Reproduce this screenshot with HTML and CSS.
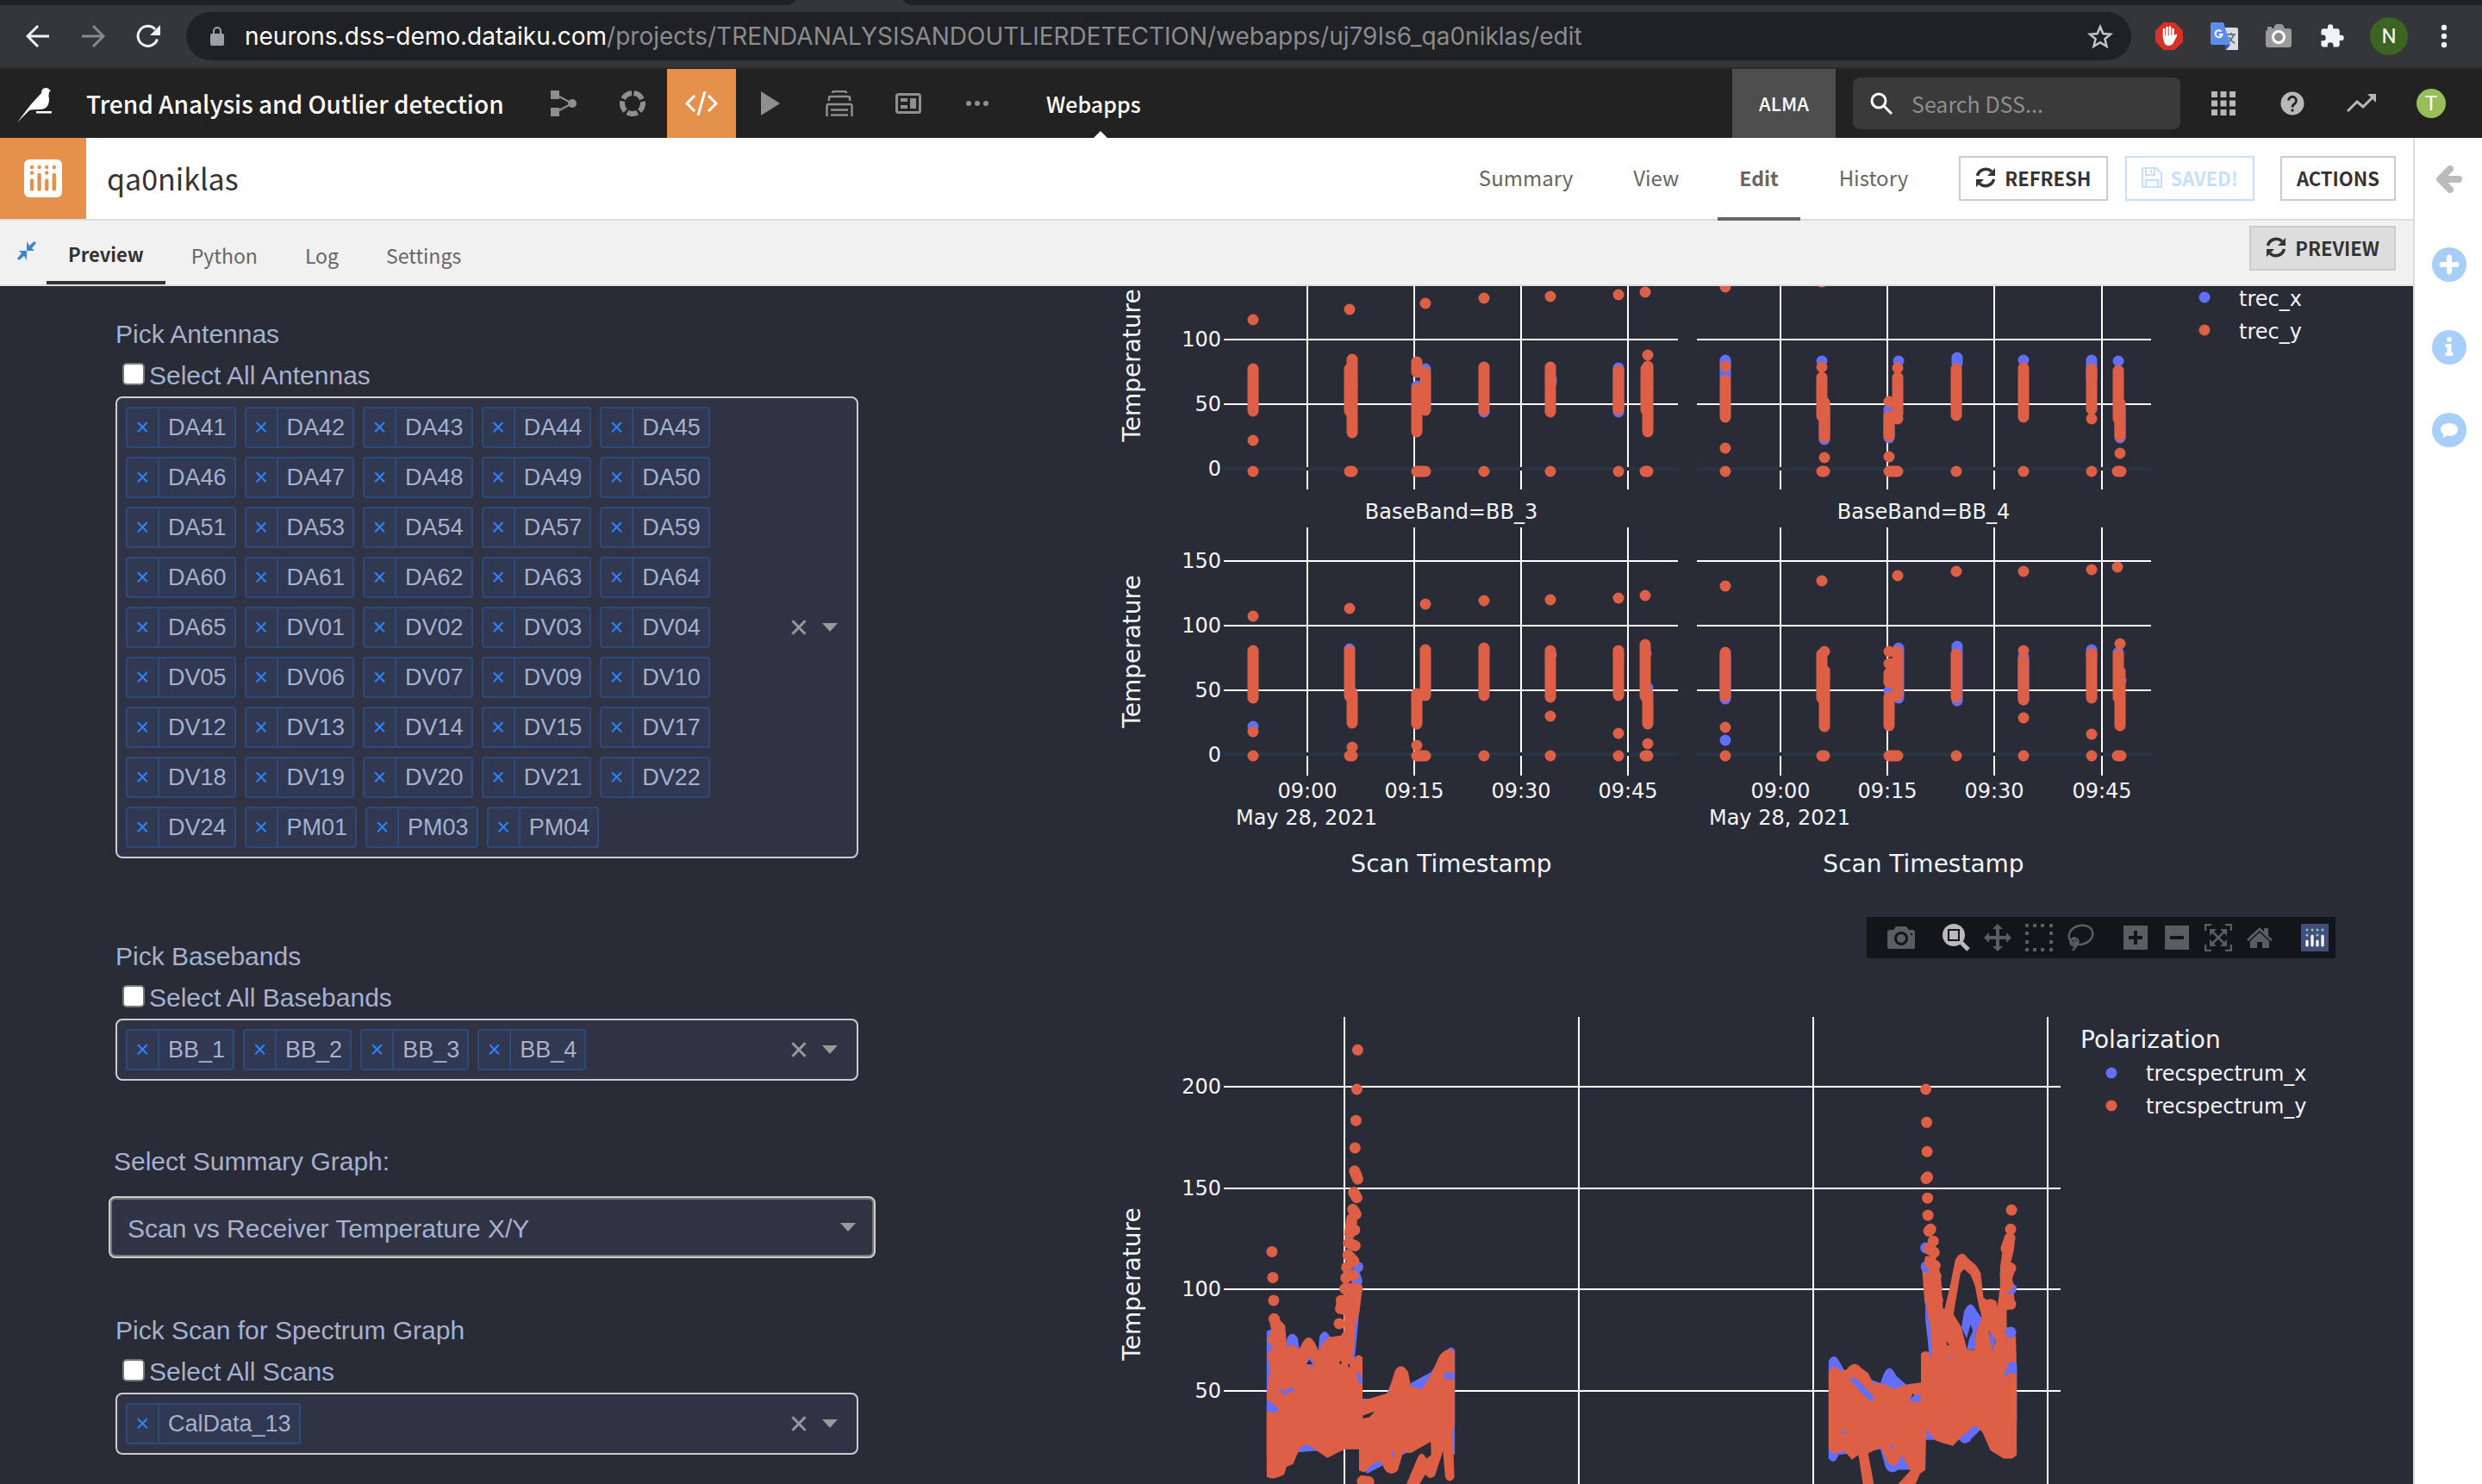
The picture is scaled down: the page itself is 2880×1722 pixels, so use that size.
FILE: index.html
```html
<!DOCTYPE html>
<html lang="en">
<head>
<meta charset="utf-8">
<title>qa0niklas</title>
<link rel="stylesheet" href="styles.css">
</head>
<body>
<div class="tabstrip"><svg class="tabshape" viewBox="0 0 150 6" aria-hidden="true"><path d="M0 6Q6 4 9 0H132Q136 5 143 6Z" fill="#35363a"/></svg></div>
<div class="browser">
  <button class="bbtn" aria-label="Back"><svg width="28" height="28" viewBox="0 0 28 28" fill="none" stroke="#f1f3f4" stroke-width="3"><path d="M27 14H3M14 2L2 14l12 12"/></svg></button>
  <button class="bbtn" aria-label="Forward"><svg width="28" height="28" viewBox="0 0 28 28" fill="none" stroke="#88898c" stroke-width="3"><path d="M1 14h24M14 2l12 12-12 12"/></svg></button>
  <button class="bbtn" aria-label="Reload"><svg width="28" height="28" viewBox="0 0 28 28"><path d="M24.500 17.500A11.500 11.500 0 1 1 22 6" fill="none" stroke="#f1f3f4" stroke-width="3"/><path d="M28 1v12H16z" fill="#f1f3f4"/></svg></button>
  <div class="urlbar">
    <svg width="16" height="22" viewBox="0 0 16 22"><rect y="8" width="16" height="14" rx="2" fill="#9aa0a6"/><path d="M4 9V5a4 4 0 0 1 8 0v4" fill="none" stroke="#9aa0a6" stroke-width="2"/></svg>
    <span class="url"><b>neurons.dss-demo.dataiku.com</b>/projects/TRENDANALYSISANDOUTLIERDETECTION/webapps/uj79Is6_qa0niklas/edit</span>
    <svg width="30" height="28" viewBox="0 0 30 28"><path d="M15 3l3.300 8 8.700.700-6.600 5.600 2.100 8.500L15 21.200l-7.500 4.600 2.100-8.500L3 11.700l8.700-.700z" fill="none" stroke="#c4c7ca" stroke-width="2.500"/></svg>
  </div>
  <div class="exts">
    <svg width="32" height="32" viewBox="0 0 32 32"><path d="M9.500 0h13L32 9.500v13L22.500 32h-13L0 22.500v-13z" fill="#d93025"/><path d="M10 8v10M13.500 6v11M17 5.500V17M20.500 8v9" stroke="#fff" stroke-width="2.600" stroke-linecap="round"/><path d="M8.800 15h13l2.500-1.500q1.500.500.500 2.500l-4 8q-2 3-5 3-5 0-6-5z" fill="#fff"/></svg>
    <svg width="32" height="32" viewBox="0 0 32 32"><path d="M14 6h16q2 0 2 2v24H18z" fill="#dadce0"/><path d="M19 14h10M24 12v2M27 14q-2 6-7 9M21 17q3 5 7 7" stroke="#607d8b" stroke-width="2" fill="none"/><path d="M16 26h7l-5 6z" fill="#3f51b5"/><path d="M2 0h13l8 26H2q-2 0-2-2V2q0-2 2-2z" fill="#5a8dee"/><path d="M12.500 10.500A4 4 0 1 0 13.500 14H9.500" fill="none" stroke="#fff" stroke-width="2"/></svg>
    <svg width="30" height="28" viewBox="0 0 30 28"><path d="M2 7V3h5v2h2l2-4q.500-1 2-1h5q1 0 2 1l2 4h5q3 0 3 3v16q0 3-3 3H3q-3 0-3-3V9q0-2 2-2z" fill="#9a9a9a"/><circle cx="15" cy="15" r="6.500" fill="#8a8a8a" stroke="#fff" stroke-width="3"/></svg>
    <svg width="30" height="30" viewBox="0 0 24 24"><path d="M20.500 11H19V7c0-1.100-.9-2-2-2h-4V3.500a2.500 2.500 0 0 0-5 0V5H4c-1.100 0-2 .9-2 2v3.800h1.500a2.700 2.700 0 0 1 0 5.400H2V20c0 1.100.9 2 2 2h3.800v-1.500a2.700 2.700 0 0 1 5.400 0V22H17c1.100 0 2-.9 2-2v-4h1.500a2.500 2.500 0 0 0 0-5z" fill="#f1f3f4"/></svg>
    <span class="avatar">N</span>
    <svg width="8" height="28" viewBox="0 0 8 28" fill="#f1f3f4"><circle cx="4" cy="4" r="3.200"/><circle cx="4" cy="14" r="3.200"/><circle cx="4" cy="24" r="3.200"/></svg>
  </div>
</div>

<header class="nav">
  <a class="logo" href="#" aria-label="Home"><svg width="40" height="42" viewBox="0 0 40 42" fill="#fff"><path d="M0 41L16 20 28 7Q28 1 33 1q4 0 4 2l2 1-2 2q-1 3 0 8 0 12-11 12-9 0-12 1Z"/><path d="M22 28h18v2.500H22z"/></svg></a>
  <a class="project" href="#">Trend Analysis and Outlier detection</a>
  <nav class="tools">
    <a href="#" aria-label="Flow"><svg width="30" height="32" viewBox="0 0 30 32" fill="#8f8f8f"><path d="M0 1h10v10H0zM0 21h10v10H0z"/><circle cx="25" cy="16" r="5"/><path d="M8 7l17 9L8 25" fill="none" stroke="#8f8f8f" stroke-width="2"/></svg></a>
    <a href="#" aria-label="Lab"><svg width="30" height="30" viewBox="0 0 30 30"><circle cx="15" cy="15" r="12" fill="none" stroke="#8f8f8f" stroke-width="6" stroke-dasharray="12.100 2.980" transform="rotate(-83 15 15)"/></svg></a>
    <a class="on" href="#" aria-label="Code"><svg width="38" height="28" viewBox="0 0 38 28" fill="none" stroke="#fff" stroke-width="3"><path d="M11 5l-9 9 9 9M27 5l9 9-9 9M23 0l-8 28"/></svg></a>
    <a href="#" aria-label="Run"><svg width="22" height="28" viewBox="0 0 22 28" fill="#8f8f8f"><path d="M0 0l22 14L0 28z"/></svg></a>
    <a href="#" aria-label="Jobs"><svg width="32" height="30" viewBox="0 0 32 30" fill="none" stroke="#8f8f8f" stroke-width="2.500"><path d="M8 3q0-2 2-2h12q2 0 2 2M4 12V8q0-1 2-1h20q2 0 2 1v4M1.500 30V18q0-2 2-2h25q2 0 2 2v12M6 22.500h20M6 28.500h20"/></svg></a>
    <a href="#" aria-label="Dashboards"><svg width="30" height="24" viewBox="0 0 30 24"><rect x="1.500" y="1.500" width="27" height="21" rx="2" fill="none" stroke="#8f8f8f" stroke-width="3"/><path d="M6 6h8v4H6zM6 14h8v4H6zM17 6h7v12h-7z" fill="#8f8f8f"/></svg></a>
    <a href="#" aria-label="More"><svg width="26" height="6" viewBox="0 0 26 6" fill="#8f8f8f"><circle cx="3" cy="3" r="3"/><circle cx="13" cy="3" r="3"/><circle cx="23" cy="3" r="3"/></svg></a>
  </nav>
  <a class="crumb" href="#">Webapps</a>
  <span class="instance">ALMA</span>
  <label class="search"><svg width="26" height="26" viewBox="0 0 26 26" fill="none" stroke="#fff" stroke-width="3"><circle cx="10" cy="10" r="8"/><path d="M16 16l9 9"/></svg><input type="text" placeholder="Search DSS..." aria-label="Search DSS"></label>
  <div class="navicons">
    <a href="#" aria-label="Apps"><svg width="28" height="28" viewBox="0 0 28 28" fill="#b8b8b8"><path d="M0 0h7v7H0zM10.500 0h7v7h-7zM21 0h7v7h-7zM0 10.500h7v7H0zM10.500 10.500h7v7h-7zM21 10.500h7v7h-7zM0 21h7v7H0zM10.500 21h7v7h-7zM21 21h7v7h-7z"/></svg></a>
    <a href="#" aria-label="Help"><svg width="28" height="28" viewBox="0 0 28 28"><circle cx="14" cy="14" r="13.500" fill="#b8b8b8"/><path d="M9.500 10.500a4.500 4.500 0 1 1 7 4Q14 16 14 18.500" fill="none" stroke="#222" stroke-width="2.800"/><path d="M12.600 20.500h2.800v3h-2.800z" fill="#222"/></svg></a>
    <a href="#" aria-label="Activity"><svg width="34" height="22" viewBox="0 0 34 22"><path d="M1 20L12 9l7 6L31 3" fill="none" stroke="#b8b8b8" stroke-width="3"/><path d="M24 0h10v10z" fill="#b8b8b8"/></svg></a>
    <span class="user">T</span>
  </div>
</header>

<div class="workspace">
  <main class="main">
    <div class="titlebar">
      <span class="kind"><svg width="44" height="44" viewBox="0 0 44 44"><rect width="44" height="44" rx="6" fill="#fff"/><path d="M9 24.500v10M17.600 18v16.500M26.200 24.500v10M34.800 18v16.500M9 9h0M17.600 9h0M26.200 9h0M34.800 9h0M9 15.500h0M26.200 15.500h0" stroke="#e5914b" stroke-width="4.400" stroke-linecap="round"/></svg></span>
      <h1>qa0niklas</h1>
      <nav class="tabs"><a href="#">Summary</a><a href="#">View</a><a class="on" href="#">Edit</a><a href="#">History</a></nav>
      <div class="actions">
        <button class="btn"><svg class="sync" width="24" height="24" viewBox="0 0 24 24"><path d="M2.500 10A10 10 0 0 1 19 5M21.500 14A10 10 0 0 1 5 19" fill="none" stroke="#333" stroke-width="3.500"/><path d="M23 1v9h-9zM1 23v-9h9z" fill="#333"/></svg>REFRESH</button>
        <button class="btn saved"><svg width="24" height="24" viewBox="0 0 24 24" fill="none" stroke="#c6dffb" stroke-width="2"><path d="M1 1h16l6 6v16H1zM5 1v8h10V1M5 23v-8h14v8M11 3v4"/></svg>SAVED!</button>
        <button class="btn act">ACTIONS</button>
      </div>
    </div>
    <div class="subbar">
      <button class="shrink" aria-label="Collapse"><svg width="22" height="22" viewBox="0 0 22 22" fill="#3b88c9"><path d="M11 0v11h9l-3-3 5-6-2-2-6 5zM11 22V11H2l3 3-5 6 2 2 6-5z"/></svg></button>
      <nav class="subtabs"><a class="on" href="#">Preview</a><a href="#">Python</a><a href="#">Log</a><a href="#">Settings</a></nav>
      <button class="btn grey"><svg class="sync" width="24" height="24" viewBox="0 0 24 24"><path d="M2.500 10A10 10 0 0 1 19 5M21.500 14A10 10 0 0 1 5 19" fill="none" stroke="#333" stroke-width="3.500"/><path d="M23 1v9h-9zM1 23v-9h9z" fill="#333"/></svg>PREVIEW</button>
    </div>
    <div class="app">
      <form class="controls">
        <section class="field antennas">
          <p class="label">Pick Antennas</p>
          <label class="all"><input type="checkbox">Select All Antennas</label>
          <div class="multi"><ul class="chips">
            <li><button type="button">×</button>DA41</li><li><button type="button">×</button>DA42</li><li><button type="button">×</button>DA43</li><li><button type="button">×</button>DA44</li><li><button type="button">×</button>DA45</li>
            <li><button type="button">×</button>DA46</li><li><button type="button">×</button>DA47</li><li><button type="button">×</button>DA48</li><li><button type="button">×</button>DA49</li><li><button type="button">×</button>DA50</li>
            <li><button type="button">×</button>DA51</li><li><button type="button">×</button>DA53</li><li><button type="button">×</button>DA54</li><li><button type="button">×</button>DA57</li><li><button type="button">×</button>DA59</li>
            <li><button type="button">×</button>DA60</li><li><button type="button">×</button>DA61</li><li><button type="button">×</button>DA62</li><li><button type="button">×</button>DA63</li><li><button type="button">×</button>DA64</li>
            <li><button type="button">×</button>DA65</li><li><button type="button">×</button>DV01</li><li><button type="button">×</button>DV02</li><li><button type="button">×</button>DV03</li><li><button type="button">×</button>DV04</li>
            <li><button type="button">×</button>DV05</li><li><button type="button">×</button>DV06</li><li><button type="button">×</button>DV07</li><li><button type="button">×</button>DV09</li><li><button type="button">×</button>DV10</li>
            <li><button type="button">×</button>DV12</li><li><button type="button">×</button>DV13</li><li><button type="button">×</button>DV14</li><li><button type="button">×</button>DV15</li><li><button type="button">×</button>DV17</li>
            <li><button type="button">×</button>DV18</li><li><button type="button">×</button>DV19</li><li><button type="button">×</button>DV20</li><li><button type="button">×</button>DV21</li><li><button type="button">×</button>DV22</li>
            <li><button type="button">×</button>DV24</li><li><button type="button">×</button>PM01</li><li><button type="button">×</button>PM03</li><li><button type="button">×</button>PM04</li>
          </ul><button type="button" class="clear">×</button><span class="caret"></span></div>
        </section>
        <section class="field basebands">
          <p class="label">Pick Basebands</p>
          <label class="all"><input type="checkbox">Select All Basebands</label>
          <div class="multi"><ul class="chips"><li><button type="button">×</button>BB_1</li><li><button type="button">×</button>BB_2</li><li><button type="button">×</button>BB_3</li><li><button type="button">×</button>BB_4</li></ul><button type="button" class="clear">×</button><span class="caret"></span></div>
        </section>
        <section class="field summary">
          <label class="label" for="graph">Select Summary Graph:</label>
          <div class="pick"><select id="graph"><option>Scan vs Receiver Temperature X/Y</option></select><span class="caret"></span></div>
        </section>
        <section class="field scans">
          <p class="label">Pick Scan for Spectrum Graph</p>
          <label class="all"><input type="checkbox">Select All Scans</label>
          <div class="multi"><ul class="chips"><li><button type="button">×</button>CalData_13</li></ul><button type="button" class="clear">×</button><span class="caret"></span></div>
        </section>
      </form>

      <div class="charts">
        <svg class="plot" viewBox="1280 332 1520 732" role="img" aria-label="Temperature by scan timestamp">
          <path class="zero" d="M1420 544H1947M1969 544H2496M1420 875H1947M1969 875H2496"/>
          <path class="grid" d="M1517 332V568M1641 332V568M1765 332V568M1889 332V568M2066 332V568M2190 332V568M2314 332V568M2439 332V568M1517 612V900M1641 612V900M1765 612V900M1889 612V900M2066 612V900M2190 612V900M2314 612V900M2439 612V900M1420 394H1947M1420 469H1947M1969 394H2496M1969 469H2496M1420 651H1947M1420 726H1947M1420 801H1947M1969 651H2496M1969 726H2496M1969 801H2496"/>
          <path class="gap" d="M1515 544h4M1639 544h4M1763 544h4M1887 544h4M2064 544h4M2188 544h4M2312 544h4M2437 544h4M1515 875h4M1639 875h4M1763 875h4M1887 875h4M2064 875h4M2188 875h4M2312 875h4M2437 875h4"/>
          <g class="dots blue">
            <path d="M1569 448h0M1644 448h0M1654 428h0M1722 478h0M1800 440v4M1878 427V478M1912 451h0"/>
            <path d="M1454 843h0M1566 753h0M1568 802h0M1644 812h0M1722 758h0M1800 760h0M1878 760h0M1910 758h0M1912 798h0"/>
            <path d="M2002 418v20M2114 419h0M2117 475V510M2192 475V508M2203 419h0M2271 415V422M2348 418h0M2427 418V440M2458 419h0M2460 476V508"/>
            <path d="M2002 762V811M2002 859h0M2117 786h0M2192 802h0M2203 752V810M2271 750V813M2348 762V812M2427 754V762M2458 757h0M2461 790h0"/>
          </g>
          <g class="dots red">
            <path d="M1454 371h0M1454 428V477M1454 511h0M1454 547h0M1566 359h0M1566 428V477M1569 417V502M1566 547h3M1644 420V432M1644 451V501M1644 547h10M1654 352h0M1654 432V476M1722 346h0M1722 426V476M1722 547h0M1799 344h0M1799 426V478M1799 547h0M1878 342h0M1878 430V475M1878 547h0M1909 339h0M1910 428V476M1912 412h0M1912 425V501M1909 547h3"/>
            <path d="M1454 715h0M1454 755V810M1454 849h0M1454 877h0M1566 706h0M1566 755V808M1569 805V839M1569 867h0M1566 877h3M1644 805V840M1644 865h0M1644 877h10M1654 701h0M1654 754V807M1722 697h0M1722 752V807M1722 877h0M1799 696h0M1799 755V809M1799 831h0M1799 877h0M1878 694h0M1878 755V807M1878 851h0M1878 877h0M1909 691h0M1909 748V808M1912 805V840M1912 863h0M1909 877h3"/>
            <path d="M2002 333h0M2002 425h0M2002 441V484M2002 520h0M2002 547h0M2114 327h0M2114 426h0M2114 438V483M2117 467V507M2117 531h0M2114 547h3M2192 466h0M2192 483V506M2192 530h0M2192 547h10M2202 427h0M2202 438V480M2202 486h0M2270 428V482M2270 547h0M2348 427V484M2348 547h0M2427 428V475M2427 486h0M2427 547h0M2458 430V486M2460 468V506M2460 526h0M2457 547h4"/>
            <path d="M2002 680h0M2002 757V808M2002 844h0M2002 877h0M2114 674h0M2114 759V810M2117 756h0M2117 778V843M2114 877h3M2192 756h0M2192 770h0M2192 781V792M2192 809V842M2192 877h10M2202 668h0M2202 756V807M2270 663h0M2270 759V809M2270 877h0M2348 663h0M2348 755h0M2348 766V812M2348 833h0M2348 877h0M2427 661h0M2427 758V810M2427 852h0M2427 877h0M2457 658h0M2458 760V810M2460 747h0M2460 779V842M2457 877h4"/>
          </g>
          <g class="tick end"><text x="1417" y="402">100</text><text x="1417" y="477">50</text><text x="1417" y="552">0</text><text x="1417" y="659">150</text><text x="1417" y="734">100</text><text x="1417" y="809">50</text><text x="1417" y="884">0</text></g>
          <g class="tick mid"><text x="1684" y="602">BaseBand=BB_3</text><text x="2232" y="602">BaseBand=BB_4</text>
            <text x="1517" y="926">09:00</text><text x="1641" y="926">09:15</text><text x="1765" y="926">09:30</text><text x="1889" y="926">09:45</text><text x="2066" y="926">09:00</text><text x="2190" y="926">09:15</text><text x="2314" y="926">09:30</text><text x="2439" y="926">09:45</text>
            <text x="1516" y="957">May 28, 2021</text><text x="2065" y="957">May 28, 2021</text></g>
          <g class="axis mid"><text x="1684" y="1012">Scan Timestamp</text><text x="2232" y="1012">Scan Timestamp</text><text transform="translate(1323 424) rotate(-90)">Temperature</text><text transform="translate(1323 756) rotate(-90)">Temperature</text></g>
          <path class="dots blue" d="M2558 345h0"/><path class="dots red" d="M2558 383h0"/>
          <g class="tick"><text x="2598" y="355">trec_x</text><text x="2598" y="393">trec_y</text></g>
        </svg>

        <div class="modebar">
          <div><button aria-label="Download plot"><svg viewBox="0 0 32 32" fill="#5c5d60"><path d="M3 7h4l3-4h12l3 4h4q3 0 3 3v17q0 2-3 2H3q-3 0-3-2V10q0-3 3-3z"/><circle cx="16" cy="17" r="8" fill="#14151a"/><circle cx="16" cy="17" r="5"/><circle cx="28" cy="12" r="1.300" fill="#14151a"/></svg></button></div>
          <div><button aria-label="Zoom"><svg viewBox="0 0 32 32" fill="#b9b9bb"><circle cx="13" cy="13" r="13"/><path d="M21 21l9 9" stroke="#b9b9bb" stroke-width="5"/><path d="M7 7h12v12H7z" stroke="#14151a" stroke-width="2"/></svg></button>
          <button aria-label="Pan"><svg viewBox="0 0 32 32" fill="#5c5d60"><path d="M16 0l6 6h-4v8h8v-4l6 6-6 6v-4h-8v8h4l-6 6-6-6h4v-8H6v4l-6-6 6-6v4h8V6h-4z"/></svg></button>
          <button aria-label="Box select"><svg viewBox="0 0 32 32" fill="none" stroke="#5c5d60" stroke-width="4"><path d="M0 2h4m5 0h4m5 0h4m6 0h4M0 30h4m5 0h4m5 0h4m6 0h4M2 9v4m0 6v4M30 9v4m0 6v4"/></svg></button>
          <button aria-label="Lasso select"><svg viewBox="0 0 32 32" fill="none" stroke="#5c5d60" stroke-width="2.500"><ellipse cx="16.500" cy="13" rx="14" ry="11" transform="rotate(-14 16 13)"/><circle cx="9" cy="21" r="4.500"/><path d="M6 17q8 5 5 9l-4 5"/></svg></button></div>
          <div><button aria-label="Zoom in"><svg viewBox="0 0 32 32"><path d="M2 2h28v28H2z" fill="#5c5d60"/><path d="M16 8v16M8 16h16" stroke="#14151a" stroke-width="4"/></svg></button>
          <button aria-label="Zoom out"><svg viewBox="0 0 32 32"><path d="M2 2h28v28H2z" fill="#5c5d60"/><path d="M8 16h16" stroke="#14151a" stroke-width="4"/></svg></button>
          <button aria-label="Autoscale"><svg viewBox="0 0 32 32" fill="#5c5d60"><path d="M1 8V1h7M24 1h7v7M31 24v7h-7M8 31H1v-7M9 9l14 14M23 9L9 23" fill="none" stroke="#5c5d60" stroke-width="2.500"/><path d="M6 6h8l-8 8zM26 6v8l-8-8zM26 26h-8l8-8zM6 26v-8l8 8z"/></svg></button>
          <button aria-label="Reset axes"><svg viewBox="0 0 32 32" fill="#5c5d60"><path d="M16 4l5 5V5h5v9l5 4-2 2L16 8 3 20l-2-2z"/><path d="M16 10l11 10v8h-8v-7h-6v7H5v-8z"/></svg></button></div>
          <div><button aria-label="Plotly"><svg viewBox="0 0 32 32"><rect width="32" height="32" rx="1" fill="#434f7b"/><path d="M7 20v5M13 14v11M19 20v5M25 14v11" stroke="#fff" stroke-width="3.200" stroke-linecap="round"/><path d="M7 7h0M13 7h0M19 7h0M25 7h0M7 13h0M19 13h0" stroke="#7fd0bd" stroke-width="3" stroke-linecap="round"/></svg></button></div>
        </div>

        <svg class="plot" viewBox="1280 1112 1520 610" role="img" aria-label="Temperature spectrum">
          <path class="grid" d="M1560 1180V1722M1832 1180V1722M2104 1180V1722M2376 1180V1722M1420 1261H2391M1420 1379H2391M1420 1496H2391M1420 1614H2391"/>
          <g transform="translate(1280 1040) scale(.5102 .435)">
            <path class="bf" d="M372 1490V1160L395 1150 412 1250 418 1180Q430 1155 443 1180L450 1240 488 1240 492 1175Q504 1148 516 1175L560 1180 572 1015Q580 980 588 1020L580 1140 572 1235 590 1275V1340L640 1340 655 1300 670 1380 700 1298 745 1270 780 1215Q790 1195 800 1210V1490L745 1450 650 1510 600 1540 580 1470Z"/>
            <path class="rf" d="M372 1375V1548Q385 1560 412 1542L417 1522 432 1515 448 1470 465 1462 485 1478 510 1498 532 1485 550 1475H582V1532L595 1537 612 1515 630 1505 642 1532Q655 1548 670 1532L682 1484 700 1485 745 1455 746 1490 735 1500Q725 1475 715 1498L690 1568H720L733 1542Q744 1560 755 1545L773 1480 778 1550Q788 1570 799 1550L795 1425 800 1410V1215Q785 1198 765 1225L745 1278 725 1315 700 1308 694 1270Q679 1240 664 1265L648 1325 612 1338 590 1345V1230Q578 1215 568 1238L574 1140 583 1110 590 1040 541 1038 549 1070 530 1070 530 1110 548 1118V1160L541 1172 515 1176 500 1190 490 1212 480 1188Q467 1166 455 1188L445 1210Q434 1185 418 1206L414 1145 398 1125 376 1122 383 1160 372 1182 386 1205 372 1222 380 1255 374 1310 372 1340 400 1370 396 1376Z"/>
            <path class="bf" d="M470 1228L482 1252H460ZM392 1310L412 1320 430 1308 434 1318 412 1330ZM372 1360Q385 1340 400 1372L372 1374ZM660 1478l3 20-8-8ZM775 1270h24v18h-24ZM576 1275q14-14 14 25l-8 0Z"/>
            <path class="hole" d="M469 1236L477 1248H462ZM591 1385L618 1374 606 1389 591 1393ZM538 1240l4 0 0 8-4 0ZM557 1248l4 0 0 8-4 0Z"/>
            <path class="dots blue" d="M579 989h0M577 1026h0"/>
            <path class="dots red" d="M579 410h0M577 515h0M575 598h0M573 671h0M572 733L579 754M570 790L577 804M568 835L575 848M566 860L561 900M572 890h0M558 925L573 932M557 957L570 973M554 990h0M552 1018h0M569 1012h0M550 1047L578 1047M542 1078h0M540 1100h0M537 1140h0M384 948h0M386 1017h0M388 1078h0M389 1127h0M590 1560L604 1562"/>
          </g>
          <g transform="translate(2080 1040) scale(.5102 .435)">
            <path class="bf" d="M82 1500V1240Q94 1215 106 1240L118 1265 200 1298 207 1275Q221 1240 236 1280L264 1308 292 1300 310 1230 302 1000 340 1100 400 1300 480 1280 492 1245Q502 1232 510 1250V1400L430 1420 400 1455Q390 1465 380 1450L302 1450V1500L268 1530 240 1530Q226 1545 212 1525L200 1475 105 1490Q95 1520 82 1500Z"/>
            <path class="rf" d="M82 1268Q94 1245 106 1264L122 1264Q139 1235 156 1258L172 1272 184 1300 205 1300 230 1314 262 1302 292 1297V1220Q304 1205 316 1225L314 1150 300 1080 295 1000 302 960 325 962 337 1010 342 1100 346 1100 358 1040 370 970Q384 940 398 965L418 985 428 1005 434 1070 442 1077Q452 1070 463 1080L466 1095 472 1040 472 990 480 925 485 905 506 905 504 940 496 980 508 990 500 1020 506 1090 487 1105 487 1150Q505 1150 508 1180L510 1275 510 1490 500 1500H480L450 1478 432 1430 417 1412 385 1440 365 1466 345 1460 325 1452 304 1420 302 1530 290 1540 280 1568H240L268 1532 248 1490 240 1512Q228 1525 216 1508L200 1470 172 1486 185 1568H160L150 1490 135 1503 118 1480 95 1488 82 1475Z"/>
            <path class="hole" d="M366 1115L382 1005 390 995 405 1010 415 1040 424 1095 430 1120 416 1165 414 1210 397 1210 384 1150ZM445 1158L462 1185 455 1210ZM350 1186l6 10-4 4ZM268 1340l6-14 6 12Z"/>
            <path class="bf" d="M384 1150L390 1108Q404 1070 418 1105L430 1125 416 1165 416 1208 396 1210 402 1180 410 1160 405 1142 396 1180ZM446 1162L462 1180 455 1212ZM302 1075L318 1230H312L302 1130ZM127 1285L145 1286 185 1335 184 1348 165 1335ZM262 1345L280 1328 292 1332 290 1350ZM478 1285L490 1250Q500 1232 510 1250V1276L495 1270ZM385 1448L410 1415 404 1455ZM112 1425l14 8-12 2ZM222 1460l10 10-6 6ZM352 1224l12 6-6 2Z"/>
            <path class="dots blue" d="M303 938h0M304 988h0M497 1047h0M496 1163h0"/>
            <path class="dots red" d="M303 515h0M305 603h0M306 681h0M304 753L307 749M307 805h0M308 851h0M310 893L314 888M320 920h0M310 940L322 950M313 980L324 985M326 1014h0M328 1047h0M330 1078h0M498 837h0M496 888h0M494 912L486 940M496 992h0M484 1010L490 1040M496 1088h0"/>
          </g>
          <g class="tick end"><text x="1417" y="1269">200</text><text x="1417" y="1387">150</text><text x="1417" y="1504">100</text><text x="1417" y="1622">50</text></g>
          <text class="axis mid" transform="translate(1323 1490) rotate(-90)">Temperature</text>
          <text class="axis" x="2414" y="1216">Polarization</text>
          <path class="dots blue" d="M2450 1245h0"/><path class="dots red" d="M2450 1283h0"/>
          <g class="tick"><text x="2490" y="1254">trecspectrum_x</text><text x="2490" y="1292">trecspectrum_y</text></g>
        </svg>
      </div>
    </div>
  </main>

  <aside class="rail">
    <button aria-label="Open panel"><svg width="30" height="32" viewBox="0 0 30 32" fill="none" stroke="#bbb" stroke-width="8" stroke-linecap="round" stroke-linejoin="round"><path d="M16 4L4 16l12 12M6 16h20"/></svg></button>
    <button aria-label="Add"><svg width="40" height="40" viewBox="0 0 40 40"><circle cx="20" cy="20" r="20" fill="#a8cefa"/><path d="M20 11.500v17M11.500 20h17" stroke="#fff" stroke-width="6" stroke-linecap="round"/></svg></button>
    <button aria-label="Details"><svg width="40" height="40" viewBox="0 0 40 40"><circle cx="20" cy="20" r="20" fill="#a8cefa"/><path d="M17.500 8.500h5v5h-5zM15.500 16h7v10h2v4h-9v-4h2v-6h-2z" fill="#fff"/></svg></button>
    <button aria-label="Discussions"><svg width="40" height="40" viewBox="0 0 40 40"><circle cx="20" cy="20" r="20" fill="#a8cefa"/><path d="M20 12c6 0 10 3 10 7.500S26 27 20 27q-1.500 0-3-.400-2 2.400-5 2.400 1.500-1.500 1.500-4Q10 22.500 10 19.500C10 15 14 12 20 12z" fill="#fff"/></svg></button>
  </aside>
</div>
</body>
</html>
```
FILE: styles.css
```css
* { box-sizing: border-box; }
body { margin: 0; font-family: "Noto Sans CJK SC", "Open Sans", sans-serif; color: #333; background: #fff; }
a { color: inherit; text-decoration: none; }
button { font: inherit; color: inherit; background: none; border: 0; padding: 0; margin: 0; }
svg { display: block; flex: none; }

/* browser chrome */
.tabstrip { height: 6px; background: #202124; }
.tabshape { width: 150px; height: 6px; margin-left: 915px; }
.browser { display: flex; align-items: center; height: 74px; padding: 0 40px 0 30px; background: #35363a; border-bottom: 2px solid #2a2b2b; }
.bbtn { width: 64px; flex: none; }
.urlbar { display: flex; align-items: center; flex: 1; height: 56px; margin-left: -6px; padding: 0 21px 0 28px; border-radius: 28px; background: #202124; }
.url { flex: 1; margin-left: 24px; font: 28px/40px Inter, Roboto, sans-serif; color: #8b8c8f; white-space: nowrap; }
.url b { font-weight: 400; color: #fff; }
.exts { display: flex; align-items: center; gap: 32px; margin-left: 28px; }
.avatar { display: flex; align-items: center; justify-content: center; width: 44px; height: 44px; margin: 0 6px 0 -3px; border-radius: 50%; background: #3c6523; color: #fff; font: 24px Roboto, sans-serif; }

/* product navigation */
.nav { display: flex; align-items: center; height: 80px; background: #222; color: #fff; font-size: 26px; line-height: 40px; }
.logo { margin-left: 20px; width: 80px; flex: none; padding-top: 4px; }
.project { width: 514px; flex: none; font-size: 28px; font-weight: 500; white-space: nowrap; }
.tools { display: flex; align-self: stretch; }
.tools a { display: flex; align-items: center; justify-content: center; width: 80px; }
.tools .on { background: #e5914b; }
.crumb { position: relative; display: flex; align-items: center; align-self: stretch; margin-left: 40px; font-size: 25px; font-weight: 500; }
.crumb::after { content: ""; position: absolute; left: 50%; bottom: 0; border: 8px solid transparent; border-top: 0; border-bottom-color: #fff; }
.instance { display: flex; align-items: center; justify-content: center; align-self: stretch; width: 120px; margin-left: auto; padding-bottom: 2px; background: #4d4d4d; font-size: 22px; font-weight: 500; }
.search { display: flex; align-items: center; width: 380px; height: 60px; margin-left: 20px; padding-left: 20px; border-radius: 8px; background: #3a3a3a; }
.search input { flex: 1; min-width: 0; margin-left: 22px; padding: 0; border: 0; background: none; color: #fff; font: inherit; font-size: 25px; }
.search input::placeholder { color: #8f8f8f; opacity: 1; }
.navicons { display: flex; align-items: center; margin: 0 19px 0 10px; }
.navicons > * { display: flex; justify-content: center; width: 80px; }
.navicons .user { align-items: center; width: 34px; height: 34px; margin-left: 24px; margin-right: 23px; border-radius: 50%; background: #96bf5c; font: 24px Roboto, sans-serif; }

.workspace { display: flex; }
.main { flex: 1; min-width: 0; }
.rail { display: flex; flex-direction: column; align-items: center; width: 80px; padding: 32px 0 0 2px; border-left: 2px solid #ddd; }
.rail button { height: 40px; }
.rail button:first-child { display: flex; height: 32px; margin-bottom: 63px; }
.rail button + button { margin-bottom: 56px; }

/* title bar */
.titlebar { display: flex; height: 96px; border-bottom: 2px solid #ddd; }
.kind { display: flex; align-items: center; justify-content: center; width: 100px; background: #e5914b; }
h1 { margin: 0 auto 0 24px; font-size: 34px; font-weight: 400; line-height: 94px; }
.tabs { display: flex; gap: 20px; }
.tabs a { height: 96px; padding: 0 25px; font-size: 24px; line-height: 92px; color: #666; }
.tabs .on { font-size: 23px; font-weight: 700; border-bottom: 4px solid #666; }
.actions { display: flex; align-items: center; gap: 20px; margin: 0 20px 0 34px; }
.btn { display: flex; align-items: center; justify-content: center; gap: 10px; height: 52px; padding: 0 17px 2px; border: 2px solid #ccc; font-size: 22px; font-weight: 700; line-height: 36px; color: #333; white-space: nowrap; }
.saved { color: #c6dffb; border-color: #c6dffb; }
.act { margin-left: 10px; }
.grey { margin: 6px 20px 0 auto; background: #ddd; }

/* editor tabs */
.subbar { display: flex; align-items: flex-start; height: 76px; background: #f1f1f1; border-bottom: 2px solid #ddd; }
.shrink { margin: 24px 12px 0 20px; }
.subtabs { display: flex; gap: 5px; }
.subtabs a { height: 74px; padding: 5px 25px 0; font-size: 23px; line-height: 70px; color: #666; }
.subtabs .on { padding-top: 3px; font-size: 22px; font-weight: 700; color: #333; border-bottom: 4px solid #333; }

/* dash app */
.app { display: grid; grid-template-columns: 16fr 19fr; background: #292b37; }
.controls { padding: 32px 284px 32px 134px; font: 30px/48px "Liberation Sans", Arial, sans-serif; color: #a5b1cd; }
.field { margin-bottom: 90px; }
.basebands { margin-bottom: 70px; }
.summary { margin: 0 -20px 60px -8px; }
.scans { margin-bottom: 0; }
.label { display: block; margin: 0; }
.summary .label { margin: 0 0 16px 6px; }
.all { display: flex; align-items: center; height: 48px; gap: 5px; }
.all input { appearance: none; width: 26px; height: 26px; margin: 0 0 4px 8px; border: 2px solid #767676; border-radius: 5px; background: #fff; }
.multi { display: flex; align-items: center; padding: 10px 22px 10px 10px; border: 2px solid #ccc; border-radius: 8px; background: #303344; }
.chips { display: flex; flex-wrap: wrap; gap: 10px; flex: 1; margin: 0; padding: 0; list-style: none; font-size: 27px; line-height: 44px; }
.chips li { display: flex; border: 2px solid #2c4a7c; border-radius: 4px; background: #303852; padding-right: 9px; }
.chips button { width: 37px; margin-right: 10px; border-right: 2px solid #2c4a7c; color: #3182f6; }
.clear { font-size: 38px; color: #999; margin-right: 16px; line-height: 40px; }
.caret { border: 9px solid transparent; border-top: 10px solid #999; border-bottom: 0; }
.pick { display: grid; align-items: center; }
.pick > * { grid-area: 1 / 1; }
.pick .caret { justify-self: end; margin-right: 23px; }
.pick select { appearance: none; width: 100%; height: 72px; padding: 4px 20px 0; border: 2px solid #777; border-radius: 8px; outline: 2px solid #ccc; outline-offset: -2px; box-shadow: inset 0 0 0 2px #777; background: #303344; color: inherit; font: inherit; }

/* charts */
.plot { width: 100%; height: auto; font-family: "DejaVu Sans", Verdana, sans-serif; }
.grid { stroke: #fff; stroke-width: 2; fill: none; }
.zero { stroke: #283442; stroke-width: 4; }
.gap { stroke: #292b37; stroke-width: 4; }
.dots { fill: none; stroke-width: 13; stroke-linecap: round; }
.dots path, path.dots { vector-effect: non-scaling-stroke; }
.blue { stroke: #636efa; }
.red { stroke: #dd5f46; }
.bf { fill: #636efa; }
.rf { fill: #dd5f46; }
.hole { fill: #292b37; }
.tick, .axis { fill: #f2f5fa; font-size: 24px; }
.axis { font-size: 28px; }
.mid { text-anchor: middle; }
.end { text-anchor: end; }
.modebar { display: flex; width: fit-content; height: 48px; margin: 0 90px 0 auto; background: #14151a; }
.modebar div { display: flex; margin-left: 16px; }
.modebar button { display: flex; align-items: center; justify-content: center; width: 48px; height: 48px; }
.modebar svg { width: 32px; height: 32px; }
```
